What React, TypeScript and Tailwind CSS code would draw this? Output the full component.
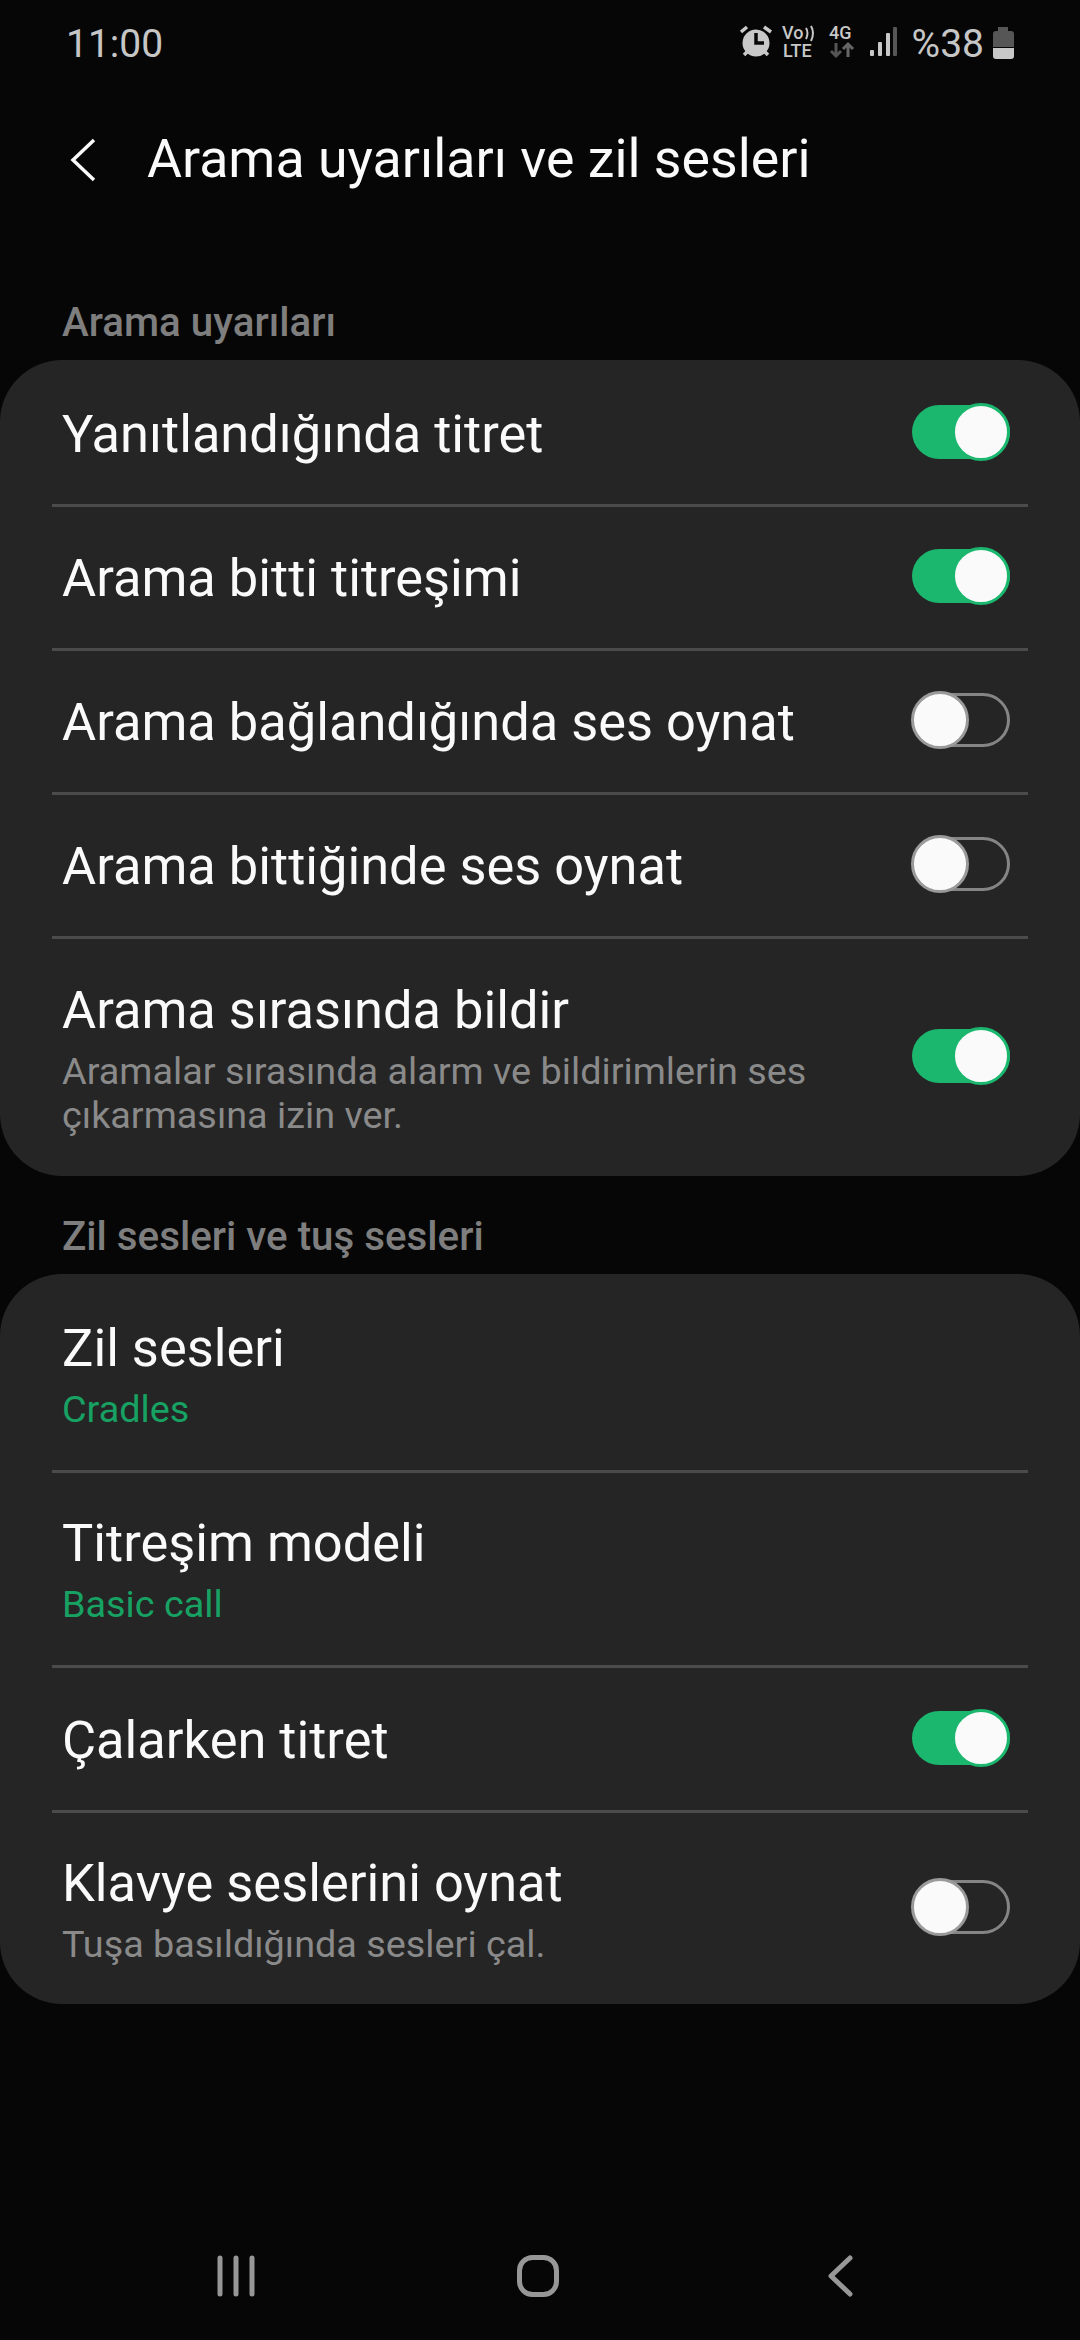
import React from 'react';

const Toggle = ({ on }: { on: boolean }) => (
  <div className="relative w-[98px] h-[54px] shrink-0">
    {on ? (
      <>
        <div className="w-full h-full rounded-full bg-[#1bb76e]" />
        <div className="absolute right-0 top-[-2px] w-[58px] h-[58px] rounded-full bg-[#fafafa] border-[3px] border-[#1bb76e]" />
      </>
    ) : (
      <>
        <div className="w-full h-full rounded-full border-[3px] border-[#858585]" />
        <div className="absolute left-[-1px] top-[-2px] w-[58px] h-[58px] rounded-full bg-[#fafafa] border-[3px] border-[#9a9a9a]" />
      </>
    )}
  </div>
);

const Row = ({ title, sub, green, toggle, last, h }: { title: string; sub?: string[]; green?: boolean; toggle?: boolean; last?: boolean; h: string }) => (
  <div className={`${h} flex items-center justify-between pl-[62px] pr-[70px] relative`}>
    <div className="flex flex-col pt-[4px]">
      <div className="text-[52.4px] leading-[60px] text-[#fafafa]">{title}</div>
      {sub && (
        <div className={`text-[37.8px] leading-[44px] mt-[9px] ${green ? 'text-[#17a263]' : 'text-[#8a8a8a]'}`}>
          {sub.map(s => <div key={s}>{s}</div>)}
        </div>
      )}
    </div>
    {toggle !== undefined && <Toggle on={toggle} />}
    {!last && <div className="absolute left-[52px] right-[52px] bottom-[-3px] h-[3px] bg-[#4b4b4b]" />}
  </div>
);

const Section = ({ label, top }: { label: string; top: string }) => (
  <div className={`${top} pb-[13px] pl-[62px] text-[40.3px] leading-[48px] font-medium text-[#7e7e7e]`}>{label}</div>
);

const StatusIcons = () => (
  <svg width="173" height="50" viewBox="0 0 173 50" className="shrink-0">
    {/* alarm */}
    <circle cx="27" cy="25" r="13.5" fill="#c8c8c8" />
    <path d="M12 14l6-5M42 14l-7-5M15 37l3-3M39 37l-3-3" stroke="#c8c8c8" strokeWidth="3.5" fill="none" />
    <path d="M27 15v10h8" stroke="#070707" strokeWidth="3.5" fill="none" />
    {/* volte */}
    <text x="53" y="21" fontSize="18" fontWeight="500" fill="#c8c8c8" fontFamily="Roboto">Vo</text>
    <path d="M77 10q3 5 0 11M82 8q4 7 0 15" stroke="#c8c8c8" strokeWidth="2" fill="none" />
    <text x="54" y="39" fontSize="18" fontWeight="500" fill="#c8c8c8" fontFamily="Roboto">LTE</text>
    {/* 4g */}
    <text x="100" y="21" fontSize="18" fontWeight="500" fill="#c8c8c8" fontFamily="Roboto">4G</text>
    <path d="M107 25v13M102 33l5 5 5-5" stroke="#555" strokeWidth="3" fill="none" />
    <path d="M119 39v-13M114 31l5-5 5 5" stroke="#666" strokeWidth="3" fill="none" />
    {/* signal */}
    <rect x="141" y="32" width="4" height="6" rx="1" fill="#c8c8c8" />
    <rect x="149" y="24" width="4" height="14" rx="1" fill="#c8c8c8" />
    <rect x="157" y="15" width="4" height="23" rx="1" fill="#c8c8c8" />
    <rect x="164" y="9" width="4" height="29" rx="1" fill="#565656" />
  </svg>
);

const App: React.FC = () => {
  return (
    <div className="w-[1080px] h-[2340px] bg-[#060606] flex flex-col" style={{ fontFamily: 'Roboto, sans-serif' }}>
      {/* status bar */}
      <div className="h-[86px] flex items-center justify-between pl-[66px] pr-[66px] text-[#c6c6c6] text-[39px]">
        <span className="pt-[3px]">11:00</span>
        <div className="flex items-center">
          <StatusIcons />
          <span className="ml-[10px] mr-[9px] pt-[3px]">%38</span>
          <svg width="21" height="32" viewBox="0 0 21 32">
            <path d="M5 0h10v4h3a3 3 0 0 1 3 3v13H0V7a3 3 0 0 1 3-3h2z" fill="#565656" />
            <path d="M0 21h21v8a3 3 0 0 1-3 3H3a3 3 0 0 1-3-3z" fill="#c8c8c8" />
          </svg>
        </div>
      </div>

      {/* header */}
      <div className="h-[148px] flex items-center pl-[70px]">
        <svg width="26" height="44" viewBox="0 0 26 44" className="shrink-0">
          <path d="M24 2L3 22l21 20" stroke="#fafafa" strokeWidth="3.5" fill="none" />
        </svg>
        <h1 className="ml-[51px] pb-[1px] text-[53.7px] text-[#fafafa]">Arama uyarıları ve zil sesleri</h1>
      </div>

      <Section label="Arama uyarıları" top="pt-[65px]" />
      <div className="bg-[#252525] rounded-[62px]">
        <Row h="h-[144px]" title="Yanıtlandığında titret" toggle={true} />
        <Row h="h-[144px]" title="Arama bitti titreşimi" toggle={true} />
        <Row h="h-[144px]" title="Arama bağlandığında ses oynat" toggle={false} />
        <Row h="h-[144px]" title="Arama bittiğinde ses oynat" toggle={false} />
        <Row h="h-[240px]" title="Arama sırasında bildir" sub={['Aramalar sırasında alarm ve bildirimlerin ses', 'çıkarmasına izin ver.']} toggle={true} last />
      </div>

      <Section label="Zil sesleri ve tuş sesleri" top="pt-[37px]" />
      <div className="bg-[#252525] rounded-[62px]">
        <Row h="h-[196px]" title="Zil sesleri" sub={['Cradles']} green />
        <Row h="h-[195px]" title="Titreşim modeli" sub={['Basic call']} green />
        <Row h="h-[145px]" title="Çalarken titret" toggle={true} />
        <Row h="h-[194px]" title="Klavye seslerini oynat" sub={['Tuşa basıldığında sesleri çal.']} toggle={false} last />
      </div>

      {/* nav bar */}
      <div className="mt-auto h-[128px] flex items-center justify-center pr-[4px]">
        <div className="w-[302px] flex justify-center">
          <svg width="40" height="42" viewBox="0 0 40 42">
            <path d="M4 3v36M20 3v36M36 3v36" stroke="#979797" strokeWidth="5" strokeLinecap="round" />
          </svg>
        </div>
        <div className="w-[302px] flex justify-center">
          <svg width="42" height="42" viewBox="0 0 42 42">
            <rect x="2.5" y="2.5" width="37" height="37" rx="13" stroke="#979797" strokeWidth="5" fill="none" />
          </svg>
        </div>
        <div className="w-[302px] flex justify-center">
          <svg width="26" height="42" viewBox="0 0 26 42">
            <path d="M23 3L4 21l19 18" stroke="#979797" strokeWidth="5" strokeLinecap="round" strokeLinejoin="round" fill="none" />
          </svg>
        </div>
      </div>
    </div>
  );
};

export default App;
